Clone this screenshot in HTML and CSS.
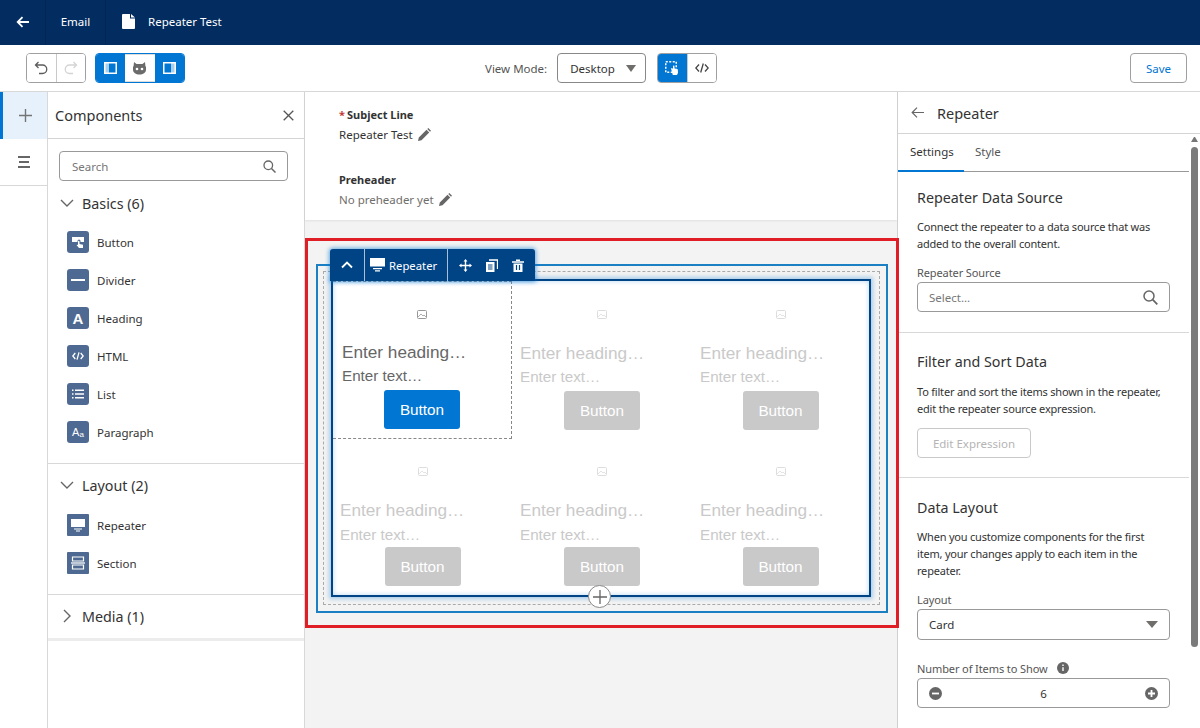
FILE: index.html
```html
<!DOCTYPE html>
<html>
<head>
    <title>Repeater Test</title>
    <link rel="stylesheet" href="styles.css">
</head>
<body>
    <header class="topbar">
        <div class="top-cell top-back">
            <svg width="14" height="14" viewBox="0 0 14 14"><path d="M13 7H2M6.500 2.200 1.700 7l4.800 4.800" fill="none" stroke="#fff" stroke-width="1.800"/></svg>
        </div>
        <div class="top-cell top-email">Email</div>
        <div class="top-title">
            <svg width="13" height="15" viewBox="0 0 13 15"><path d="M1 0h7v4.500h5V14a1 1 0 0 1-1 1H1a1 1 0 0 1-1-1V1a1 1 0 0 1 1-1zM9 0l4 3.500H9z" fill="#fff"/></svg>
            <span>Repeater Test</span>
        </div>
    </header>

    <div class="toolbar">
        <div class="btn-group btn-group-history">
            <button class="tool">
                <svg width="16" height="16" viewBox="0 0 16 16"><path d="M5.500 2 2.500 5l3 3M3 5h6.500a4 4 0 0 1 0 8.500H6" fill="none" stroke="#5c5c5c" stroke-width="1.300"/></svg>
            </button>
            <button class="tool tool-off">
                <svg width="16" height="16" viewBox="0 0 16 16"><path d="M10.500 2l3 3-3 3M13 5H6.500a4 4 0 0 0 0 8.500H10" fill="none" stroke="#d4d4d4" stroke-width="1.300"/></svg>
            </button>
        </div>
        <div class="btn-group btn-group-panels">
            <button class="tool tool-on">
                <svg width="13" height="12" viewBox="0 0 13 12"><rect x=".75" y=".75" width="11.500" height="10.500" fill="none" stroke="#fff" stroke-width="1.500"/><rect x="1" y="1" width="4" height="10" fill="#fff" opacity=".65"/></svg>
            </button>
            <button class="tool tool-mid">
                <svg width="13" height="13" viewBox="0 0 13 13"><path d="M1 0l2.500 2h6L12 0l.4 4a6 4.500 0 0 1 .6 3.500C13 11 10 12.500 6.500 12.500S0 11 0 7.500A6 4.500 0 0 1 .6 4z" fill="#6b6b6b"/><circle cx="4" cy="7" r="1.300" fill="#fff"/><circle cx="9" cy="7" r="1.300" fill="#fff"/></svg>
            </button>
            <button class="tool tool-on">
                <svg width="13" height="12" viewBox="0 0 13 12"><rect x=".75" y=".75" width="11.500" height="10.500" fill="none" stroke="#fff" stroke-width="1.500"/><rect x="8" y="1" width="4" height="10" fill="#fff" opacity=".65"/></svg>
            </button>
        </div>
        <div class="view-mode">
            <span class="view-label">View Mode:</span>
            <div class="view-select">Desktop<span class="caret"></span></div>
        </div>
        <div class="btn-group btn-group-mode">
            <button class="tool tool-on">
                <svg width="15" height="15" viewBox="0 0 15 15"><rect x=".75" y=".75" width="10.500" height="10.500" fill="none" stroke="#fff" stroke-width="1.500" stroke-dasharray="2 1.500"/><path d="M6 7.500l1-.6 1 1V4.800l1.300-.3.300 3 3.200.8.200 3.500-1 2.200H7.800z" fill="#fff"/></svg>
            </button>
            <button class="tool">
                <svg width="14" height="10" viewBox="0 0 14 10"><path d="M4 1.500.8 5 4 8.500M10 1.500 13.200 5 10 8.500M8.300.5 5.700 9.500" fill="none" stroke="#444" stroke-width="1.300"/></svg>
            </button>
        </div>
        <button class="save">Save</button>
    </div>

    <div class="workspace">
        <nav class="rail">
            <div class="rail-tab rail-active">
                <svg width="13" height="13" viewBox="0 0 13 13"><path d="M6.500 0v13M0 6.500h13" stroke="#747474" stroke-width="1.400"/></svg>
            </div>
            <div class="rail-tab">
                <svg width="12" height="12" viewBox="0 0 12 12"><path d="M0 1h12M1 6h10M0 11h12" stroke="#666" stroke-width="2"/></svg>
            </div>
        </nav>

        <aside class="components">
            <div class="panel-head">
                <span>Components</span>
                <svg width="11" height="11" viewBox="0 0 11 11"><path d="M.7.700l9.600 9.600M10.300.700.700 10.300" stroke="#555" stroke-width="1.300"/></svg>
            </div>
            <div class="comp-search">
                <div class="search-box">
                    <span>Search</span>
                    <svg width="13" height="13" viewBox="0 0 13 13"><circle cx="5.300" cy="5.300" r="4.300" fill="none" stroke="#666" stroke-width="1.300"/><path d="M8.500 8.500 12.500 12.500" stroke="#666" stroke-width="1.500"/></svg>
                </div>
            </div>

            <section class="group group-basics">
                <h3 class="group-title">
                    <svg width="14" height="8" viewBox="0 0 14 8"><path d="M1 1l6 6 6-6" fill="none" stroke="#666" stroke-width="1.400"/></svg>
                    Basics (6)
                </h3>
                <div class="comp-item">
                    <span class="comp-icon"><svg width="14" height="14" viewBox="0 0 14 14"><path d="M1 2h12v5H9.500V6a1 1 0 0 0-3 0v1H1z" fill="#fff"/><path d="M7 6.500a.7.700 0 0 1 1.500 0V9l3.500.8V13H8L5.500 10l1.500-.3z" fill="#fff"/></svg></span>
                    Button
                </div>
                <div class="comp-item">
                    <span class="comp-icon"><svg width="14" height="14" viewBox="0 0 14 14"><path d="M0 7h14" stroke="#fff" stroke-width="2"/></svg></span>
                    Divider
                </div>
                <div class="comp-item">
                    <span class="comp-icon icon-letter">A</span>
                    Heading
                </div>
                <div class="comp-item">
                    <span class="comp-icon"><svg width="12" height="8" viewBox="0 0 12 8"><path d="M3.300 1 .8 4l2.500 3M8.700 1l2.500 3-2.500 3M7 .3 5 7.700" fill="none" stroke="#fff" stroke-width="1.300"/></svg></span>
                    HTML
                </div>
                <div class="comp-item">
                    <span class="comp-icon"><svg width="12" height="10" viewBox="0 0 12 10"><path d="M3 1.200h9M3 5h9M3 8.800h9M0 1.200h1.500M0 5h1.500M0 8.800h1.500" stroke="#fff" stroke-width="1.500"/></svg></span>
                    List
                </div>
                <div class="comp-item">
                    <span class="comp-icon icon-para">A<small>a</small></span>
                    Paragraph
                </div>
            </section>

            <section class="group group-layout">
                <h3 class="group-title">
                    <svg width="14" height="8" viewBox="0 0 14 8"><path d="M1 1l6 6 6-6" fill="none" stroke="#666" stroke-width="1.400"/></svg>
                    Layout (2)
                </h3>
                <div class="comp-item">
                    <span class="comp-icon comp-square"><svg width="14" height="14" viewBox="0 0 14 14"><path d="M0 1h14v8H0zM3 10.500h8v1H3zM5 12.500h4v1H5z" fill="#fff"/></svg></span>
                    Repeater
                </div>
                <div class="comp-item">
                    <span class="comp-icon comp-square"><svg width="14" height="14" viewBox="0 0 14 14"><path d="M1.500 1h11v4h-11zM1.500 9h11v4h-11z" fill="none" stroke="#fff" stroke-width="1.200"/><path d="M0 7h14" stroke="#fff" stroke-width="1.300"/></svg></span>
                    Section
                </div>
            </section>

            <section class="group group-media">
                <h3 class="group-title">
                    <svg class="chev-right" width="8" height="14" viewBox="0 0 8 14"><path d="M1 1l6 6-6 6" fill="none" stroke="#666" stroke-width="1.400"/></svg>
                    Media (1)
                </h3>
            </section>
        </aside>

        <main class="canvas">
            <div class="subject">
                <div class="field-label"><span class="req">*</span>Subject Line</div>
                <div class="field-value">Repeater Test
                    <svg width="13" height="13" viewBox="0 0 13 13"><path d="M0 13l.8-3.500 7.700-7.700 2.700 2.700-7.700 7.700zM9.300 1l1-1 2.700 2.700-1 1z" fill="#666"/></svg>
                </div>
                <div class="field-label label-pre">Preheader</div>
                <div class="field-value value-empty">No preheader yet
                    <svg width="13" height="13" viewBox="0 0 13 13"><path d="M0 13l.8-3.500 7.700-7.700 2.700 2.700-7.700 7.700zM9.300 1l1-1 2.700 2.700-1 1z" fill="#666"/></svg>
                </div>
            </div>

            <div class="stage">
                <div class="frame-outer">
                    <div class="frame-dotted">
                        <div class="repeater">
                            <div class="card card-active">
                                <svg class="card-img" width="10" height="9" viewBox="0 0 10 9"><rect x=".5" y=".5" width="9" height="8" rx="1" fill="none" stroke="#999"/><path d="M1 7l3-3 2 2 1-1 2 2" fill="none" stroke="#999" stroke-width=".8"/></svg>
                                <div class="card-heading">Enter heading…</div>
                                <div class="card-text">Enter text…</div>
                                <div class="card-btn">Button</div>
                            </div>
                            <div class="card">
                                <svg class="card-img" width="10" height="9" viewBox="0 0 10 9"><rect x=".5" y=".5" width="9" height="8" rx="1" fill="none" stroke="#ddd"/><path d="M1 7l3-3 2 2 1-1 2 2" fill="none" stroke="#ddd" stroke-width=".8"/></svg>
                                <div class="card-heading">Enter heading…</div>
                                <div class="card-text">Enter text…</div>
                                <div class="card-btn">Button</div>
                            </div>
                            <div class="card">
                                <svg class="card-img" width="10" height="9" viewBox="0 0 10 9"><rect x=".5" y=".5" width="9" height="8" rx="1" fill="none" stroke="#ddd"/><path d="M1 7l3-3 2 2 1-1 2 2" fill="none" stroke="#ddd" stroke-width=".8"/></svg>
                                <div class="card-heading">Enter heading…</div>
                                <div class="card-text">Enter text…</div>
                                <div class="card-btn">Button</div>
                            </div>
                            <div class="card card-low card-low-first">
                                <svg class="card-img" width="10" height="9" viewBox="0 0 10 9"><rect x=".5" y=".5" width="9" height="8" rx="1" fill="none" stroke="#ddd"/><path d="M1 7l3-3 2 2 1-1 2 2" fill="none" stroke="#ddd" stroke-width=".8"/></svg>
                                <div class="card-heading">Enter heading…</div>
                                <div class="card-text">Enter text…</div>
                                <div class="card-btn">Button</div>
                            </div>
                            <div class="card card-low">
                                <svg class="card-img" width="10" height="9" viewBox="0 0 10 9"><rect x=".5" y=".5" width="9" height="8" rx="1" fill="none" stroke="#ddd"/><path d="M1 7l3-3 2 2 1-1 2 2" fill="none" stroke="#ddd" stroke-width=".8"/></svg>
                                <div class="card-heading">Enter heading…</div>
                                <div class="card-text">Enter text…</div>
                                <div class="card-btn">Button</div>
                            </div>
                            <div class="card card-low">
                                <svg class="card-img" width="10" height="9" viewBox="0 0 10 9"><rect x=".5" y=".5" width="9" height="8" rx="1" fill="none" stroke="#ddd"/><path d="M1 7l3-3 2 2 1-1 2 2" fill="none" stroke="#ddd" stroke-width=".8"/></svg>
                                <div class="card-heading">Enter heading…</div>
                                <div class="card-text">Enter text…</div>
                                <div class="card-btn">Button</div>
                            </div>

                            <div class="float-bar">
                                <div class="float-cell float-up">
                                    <svg width="12" height="8" viewBox="0 0 12 8"><path d="M1 6.500 6 1.500l5 5" fill="none" stroke="#fff" stroke-width="1.800"/></svg>
                                </div>
                                <div class="float-cell float-name">
                                    <svg width="15" height="14" viewBox="0 0 15 14"><path d="M0 0h15v8.500H0zM3 10h9v1.200H3zM5 12.300h5v1.200H5z" fill="#fff"/></svg>
                                    Repeater
                                </div>
                                <div class="float-actions">
                                    <svg width="13" height="13" viewBox="0 0 13 13"><path d="M6.500 0 8.500 2.500H7.200v3.300h3.300V4.500L13 6.500l-2.500 2V7.200H7.200v3.300h1.300L6.500 13l-2-2.500h1.300V7.200H2.500v1.300L0 6.500l2.500-2v1.300h3.300V2.500H4.500z" fill="#fff"/></svg>
                                    <svg width="12" height="13" viewBox="0 0 12 13"><path d="M0 3h8.500v10H0z" fill="#fff"/><path d="M2 6h4.500M2 8h4.500M2 10h4.500" stroke="#014486"/><path d="M3 1h8.500v9" fill="none" stroke="#fff" stroke-width="1.300"/></svg>
                                    <svg width="12" height="13" viewBox="0 0 12 13"><path d="M4 1.200h4M0 3h12" stroke="#fff" stroke-width="1.500"/><path d="M1.500 4.500h9V13h-9z" fill="#fff"/><path d="M4.500 6v5M7.500 6v5" stroke="#014486" stroke-width="1.200"/></svg>
                                </div>
                            </div>
                            <div class="add-btn">
                                <svg width="14" height="14" viewBox="0 0 14 14"><path d="M7 0v14M0 7h14" stroke="#666" stroke-width="1.300"/></svg>
                            </div>
                        </div>
                    </div>
                </div>
            </div>
        </main>

        <aside class="props">
            <div class="props-head">
                <svg width="13" height="11" viewBox="0 0 13 11"><path d="M13 5.500H1.500M6 .7 1.200 5.500 6 10.300" fill="none" stroke="#666" stroke-width="1.200"/></svg>
                <span>Repeater</span>
            </div>
            <div class="tabs">
                <span class="tab tab-active">Settings</span>
                <span class="tab">Style</span>
            </div>
            <div class="scrollbar"><span class="scroll-up"></span><span class="scroll-thumb"></span></div>

            <section class="prop-section prop-source">
                <h2>Repeater Data Source</h2>
                <p>Connect the repeater to a data source that was added to the overall content.</p>
                <label>Repeater Source</label>
                <div class="prop-input">
                    <span class="placeholder">Select...</span>
                    <svg width="15" height="15" viewBox="0 0 15 15"><circle cx="6" cy="6" r="5" fill="none" stroke="#666" stroke-width="1.500"/><path d="M9.700 9.700 14.300 14.300" stroke="#666" stroke-width="1.800"/></svg>
                </div>
            </section>

            <section class="prop-section prop-filter">
                <h2>Filter and Sort Data</h2>
                <p>To filter and sort the items shown in the repeater, edit the repeater source expression.</p>
                <button class="edit-expr">Edit Expression</button>
            </section>

            <section class="prop-section prop-layout">
                <h2>Data Layout</h2>
                <p>When you customize components for the first<br>item, your changes apply to each item in the repeater.</p>
                <label class="label-layout">Layout</label>
                <div class="prop-input input-tall">
                    <span>Card</span>
                    <span class="caret caret-dark"></span>
                </div>
                <label class="label-items">Number of Items to Show
                    <svg width="12" height="12" viewBox="0 0 12 12"><circle cx="6" cy="6" r="6" fill="#666"/><path d="M6 5.200v3.800M6 2.500v1.500" stroke="#fff" stroke-width="1.400"/></svg>
                </label>
                <div class="prop-input stepper">
                    <svg width="13" height="13" viewBox="0 0 13 13"><circle cx="6.500" cy="6.500" r="6.500" fill="#666"/><path d="M3 6.500h7" stroke="#fff" stroke-width="1.800"/></svg>
                    <span>6</span>
                    <svg width="13" height="13" viewBox="0 0 13 13"><circle cx="6.500" cy="6.500" r="6.500" fill="#666"/><path d="M3 6.500h7M6.500 3v7" stroke="#fff" stroke-width="1.800"/></svg>
                </div>
            </section>
        </aside>
    </div>
</body>
</html>
```

FILE: styles.css
```css
* {
    box-sizing: border-box;
}
html, body {
    height: 100%;
}
body {
    margin: 0;
    overflow: hidden;
    display: flex;
    flex-direction: column;
    font-family: "Noto Sans", "Open Sans", sans-serif;
    font-size: 11.5px;
    color: #333;
    background: #fff;
}
svg {
    display: block;
    flex-shrink: 0;
}

/* top bar */
.topbar {
    height: 45px;
    flex-shrink: 0;
    display: flex;
    background: #032d60;
    color: #fff;
}
.top-cell {
    display: flex;
    align-items: center;
    justify-content: center;
    padding-bottom: 2px;
    border-right: 1px solid #02264f;
}
.top-back {
    width: 46px;
}
.top-email {
    width: 60px;
}
.top-title {
    display: flex;
    align-items: center;
    gap: 13px;
    padding: 0 0 2px 16px;
}

/* toolbar */
.toolbar {
    height: 47px;
    flex-shrink: 0;
    display: flex;
    align-items: center;
    padding: 0 13px 0 26px;
    border-bottom: 1px solid #d8d8d8;
}
.btn-group {
    display: flex;
    height: 30px;
    border: 1px solid #a0a0a0;
    border-radius: 4px;
    overflow: hidden;
}
.btn-group-history,
.btn-group-mode {
    width: 60px;
}
.tool {
    flex: 1;
    padding: 0;
    border: none;
    background: #fff;
    display: flex;
    align-items: center;
    justify-content: center;
}
.tool + .tool {
    border-left: 1px solid #c9c9c9;
}
.tool-off {
    border-left-color: #a0a0a0;
}
.tool-on {
    background: #0176d3;
}
.btn-group-panels {
    width: 90px;
    margin-left: 9px;
    border-color: #0176d3;
}
.btn-group-panels .tool {
    border-left: none;
}
.btn-group-panels .tool-mid {
    border-top: 1px solid #ddd;
    border-bottom: 1px solid #ddd;
}
.view-mode {
    margin-left: 300px;
    display: flex;
    align-items: center;
    gap: 10px;
}
.view-label {
    color: #555;
}
.view-select {
    width: 89px;
    height: 30px;
    padding: 0 0 0 12px;
    display: flex;
    align-items: center;
    justify-content: space-between;
    border: 1px solid #888;
    border-radius: 4px;
    color: #333;
}
.caret {
    width: 0;
    height: 0;
    margin-right: 9px;
    border-left: 5.5px solid transparent;
    border-right: 5.5px solid transparent;
    border-top: 7px solid #706e6b;
}
.btn-group-mode {
    margin-left: 11px;
}
.save {
    margin-left: auto;
    width: 57px;
    height: 30px;
    padding: 0;
    border: 1px solid #a0a0a0;
    border-radius: 4px;
    background: #fff;
    color: #0176d3;
    font: inherit;
}

/* main columns */
.workspace {
    flex: 1;
    min-height: 0;
    display: flex;
}
.rail {
    width: 48px;
    flex-shrink: 0;
    border-right: 1px solid #d8d8d8;
}
.rail-tab {
    height: 47px;
    display: flex;
    align-items: center;
    justify-content: center;
    border-bottom: 1px solid #d8d8d8;
}
.rail-active {
    background: #e6f1fb;
    border-left: 3px solid #0176d3;
    border-bottom: none;
}

/* components panel */
.components {
    width: 257px;
    flex-shrink: 0;
    border-right: 1px solid #d8d8d8;
}
.panel-head {
    height: 47px;
    padding: 0 10px 0 7px;
    display: flex;
    align-items: center;
    justify-content: space-between;
    border-bottom: 1px solid #d4d4d4;
    font-size: 14.5px;
    color: #333;
}
.comp-search {
    padding: 12px 16px 0 11px;
}
.search-box {
    height: 30px;
    padding: 0 11px 0 12px;
    display: flex;
    align-items: center;
    justify-content: space-between;
    border: 1px solid #999;
    border-radius: 4px;
    color: #777;
}
.group {
    border-bottom: 1px solid #d8d8d8;
}
.group-title {
    margin: 0;
    height: 24px;
    display: flex;
    align-items: center;
    gap: 8px;
    padding-left: 12px;
    font-size: 14.3px;
    font-weight: 400;
    color: #333;
}
.chev-right {
    margin: 0 3px;
}
.group-basics {
    padding: 10px 0 12px;
}
.group-layout {
    padding: 9px 0 12px;
}
.group-media {
    padding: 9px 0 10px;
    border-bottom: 3px solid #ececec;
}
.comp-item {
    height: 38px;
    display: flex;
    align-items: center;
    gap: 8px;
    padding-left: 19px;
    color: #333;
}
.group-title + .comp-item {
    margin-top: 8px;
}
.group-layout .group-title + .comp-item {
    margin-top: 9px;
}
.comp-icon {
    width: 22px;
    height: 22px;
    display: flex;
    align-items: center;
    justify-content: center;
    border-radius: 3px;
    background: #4f6a92;
    color: #fff;
}
.comp-square {
    border-radius: 1px;
}
.icon-letter {
    font: 700 15px "Liberation Sans", sans-serif;
}
.icon-para {
    font: 400 11px "Liberation Sans", sans-serif;
}
.icon-para small {
    font-size: 8px;
    margin-top: 5px;
}

/* middle */
.canvas {
    flex: 1;
    min-width: 0;
    background: #f3f3f3;
}
.subject {
    height: 128px;
    padding: 15px 34px;
    background: #fff;
    box-shadow: 0 1px 2px rgba(0, 0, 0, 0.08);
}
.field-label {
    height: 16px;
    line-height: 16px;
    font-weight: 700;
    font-size: 11px;
}
.req {
    color: #c23934;
    margin-right: 2px;
}
.label-pre {
    margin-top: 29px;
}
.field-value {
    margin-top: 2px;
    height: 18px;
    display: flex;
    align-items: center;
    gap: 5px;
}
.value-empty {
    color: #706e6b;
}
.stage {
    position: relative;
    z-index: 2;
    height: 390px;
    margin: 18px -2px 0 0;
    padding: 23px 8px 12px 8px;
    border: 3px solid #e01e26;
}
.frame-outer {
    height: 349px;
    padding: 5px 6px 6px 5px;
    border: 2px solid #1b7fc4;
}
.frame-dotted {
    height: 100%;
    padding: 7px 8px 7px 7px;
    border: 1px dashed #aaa;
}
.repeater {
    position: relative;
    height: 100%;
    display: grid;
    grid-template-columns: 179px 180px 1fr;
    grid-template-rows: 158px 1fr;
    background: #fff;
    border: 2px solid #014486;
    box-shadow: 0 0 4px 2px rgba(1, 118, 211, 0.3), inset 0 0 5px rgba(1, 118, 211, 0.3);
}
.card {
    display: flex;
    flex-direction: column;
    align-items: center;
    padding-top: 29px;
}
.card-active {
    border: 1px dashed #888;
    border-left: none;
    padding-top: 28px;
}
.card-low {
    padding-top: 28px;
}
.card-img {
    margin-bottom: 23px;
}
.card-active .card-img {
    margin-bottom: 22px;
}
.card-heading {
    align-self: flex-start;
    margin-left: 8px;
    font: 17.2px/22px "Liberation Sans", sans-serif;
    color: #c9c9c9;
}
.card-text {
    align-self: flex-start;
    margin: 2px 0 0 8px;
    font: 15.2px/22px "Liberation Sans", sans-serif;
    color: #c9c9c9;
}
.card-low .card-text {
    margin-top: 3px;
}
.card-low .card-btn {
    margin-top: 1px;
}
.card-low-first .card-heading,
.card-low-first .card-text {
    margin-left: 7px;
}
.card-btn {
    width: 76px;
    height: 39px;
    margin-top: 3px;
    display: flex;
    align-items: center;
    justify-content: center;
    border-radius: 3px;
    background: #c9c9c9;
    color: #fff;
    font: 15.3px "Liberation Sans", sans-serif;
}
.card-active .card-heading,
.card-active .card-text {
    margin-left: 9px;
    color: #666;
}
.card-active .card-btn {
    background: #0176d3;
}

/* floating controls on the selected repeater */
.float-bar {
    position: absolute;
    left: -3px;
    top: -32px;
    width: 205px;
    height: 32px;
    display: flex;
    align-items: center;
    background: #014486;
    color: #fff;
    border-radius: 3px 3px 0 0;
    box-shadow: 0 0 4px 1px rgba(1, 118, 211, 0.6);
}
.float-cell {
    height: 100%;
    display: flex;
    align-items: center;
    border-right: 1px solid #a8bfd6;
}
.float-up {
    width: 35px;
    justify-content: center;
}
.float-name {
    width: 83px;
    gap: 4px;
    padding-left: 5px;
    font-size: 11.3px;
}
.float-actions {
    flex: 1;
    display: flex;
    align-items: center;
    gap: 14px;
    padding-left: 11px;
}
.add-btn {
    position: absolute;
    left: 255px;
    bottom: -13px;
    width: 23px;
    height: 23px;
    display: flex;
    align-items: center;
    justify-content: center;
    border: 1px solid #888;
    border-radius: 50%;
    background: #fff;
}

/* settings panel */
.props {
    position: relative;
    width: 303px;
    flex-shrink: 0;
    overflow: hidden;
    border-left: 1px solid #d0d0d0;
}
.props-head {
    height: 42px;
    display: flex;
    align-items: center;
    gap: 13px;
    padding-left: 13px;
    border-bottom: 1px solid #d4d4d4;
    font-size: 14.5px;
}
.tabs {
    height: 38px;
    width: 291px;
    display: flex;
    border-bottom: 1px solid #999;
}
.tab {
    padding: 0 12px;
    line-height: 36px;
    color: #555;
}
.tab-active {
    width: 66px;
    height: 38px;
    color: #333;
    border-bottom: 2px solid #0176d3;
}
.tab + .tab {
    padding-left: 11px;
}
.scrollbar {
    position: absolute;
    top: 45px;
    right: 2px;
    width: 7px;
}
.scroll-up {
    display: block;
    margin: 0 0 5px;
    border-left: 3.5px solid transparent;
    border-right: 3.5px solid transparent;
    border-bottom: 5px solid #777;
}
.scroll-thumb {
    display: block;
    height: 500px;
    border-radius: 4px;
    background: #7b7b7b;
}
.prop-section {
    width: 291px;
    padding: 0 19px;
    border-bottom: 1px solid #d8d8d8;
}
.prop-section h2 {
    margin: 0;
    font-size: 14.3px;
    line-height: 20px;
    font-weight: 400;
    color: #333;
}
.prop-section p {
    margin: 10px 0 0;
    font-size: 11px;
    letter-spacing: -0.2px;
    line-height: 17px;
    color: #333;
}
.prop-section label {
    display: flex;
    align-items: center;
    gap: 9px;
    margin-top: 12px;
    height: 16px;
    font-size: 11px;
    letter-spacing: -0.1px;
    color: #555;
}
.prop-source {
    height: 161px;
    padding-top: 16px;
}
.prop-filter {
    height: 145px;
    padding-top: 19px;
}
.prop-filter p {
    margin-top: 11px;
}
.prop-layout {
    border-bottom: none;
    padding-top: 20px;
}
.prop-input {
    height: 30px;
    margin-top: 2px;
    padding: 0 11px;
    display: flex;
    align-items: center;
    justify-content: space-between;
    border: 1px solid #999;
    border-radius: 4px;
    color: #333;
}
.input-tall {
    height: 31px;
}
.stepper {
    margin-top: 2px;
}
.placeholder {
    color: #777;
}
.caret-dark {
    margin: 0;
    border-left-width: 6px;
    border-right-width: 6px;
    border-top-width: 7px;
}
.edit-expr {
    display: block;
    margin-top: 11px;
    width: 114px;
    height: 30px;
    padding: 0;
    border: 1px solid #c9c9c9;
    border-radius: 4px;
    background: #fff;
    color: #b4b4b4;
    font: inherit;
}
.prop-section .label-items {
    margin-top: 20px;
}
```
